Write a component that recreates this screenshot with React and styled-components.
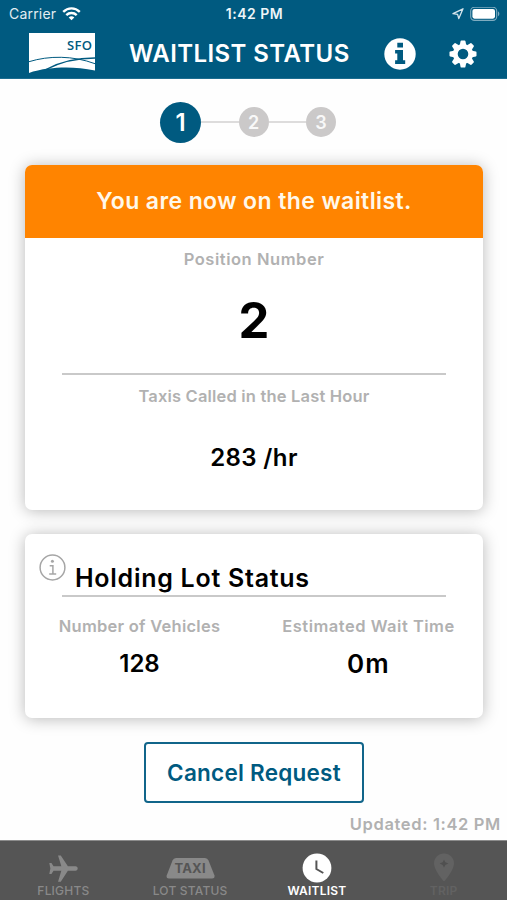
import React from "react";
import styled, { createGlobalStyle } from "styled-components";
import { IoMdAirplane } from "react-icons/io";

const blue = "#005a80";

const GlobalStyle = createGlobalStyle`
  * { box-sizing: border-box; }
  body { margin: 0; background: #fff; font-family: Inter, "Liberation Sans", sans-serif; }
  svg { display: block; flex: none; }
`;

const Screen = styled.div`
  width: 507px;
  height: 900px;
  overflow: hidden;
  display: flex;
  flex-direction: column;
  background: #fefefe;
`;

const Header = styled.header`
  height: 79px;
  flex: none;
  background: ${blue};
  border-bottom: 1px solid #1c6d90;
  color: #fff;
`;

const StatusBar = styled.div`
  height: 28px;
  padding: 0 7px 0 9px;
  display: grid;
  grid-template-columns: 1fr auto 1fr;
  align-items: center;
  font-size: 14px;
  line-height: 28px;
`;

const Carrier = styled.div`
  display: flex;
  align-items: center;
  gap: 6px;
  letter-spacing: 0.2px;
  color: #e3edf2;
`;

const Clock = styled.div`
  font-weight: 600;
  letter-spacing: 0.5px;
  color: #eef5f8;
`;

const Indicators = styled.div`
  display: flex;
  justify-content: flex-end;
  align-items: center;
  gap: 6px;
`;

const TitleBar = styled.div`
  height: 50px;
  padding: 0 30px 0 29px;
  display: flex;
  align-items: center;
`;

const Title = styled.h1`
  margin: 1px 0 0 34px;
  width: 255px;
  font-size: 24px;
  line-height: 30px;
  font-weight: 600;
  letter-spacing: 0.42px;
  white-space: nowrap;
`;

const HeaderActions = styled.div`
  flex: 1;
  display: flex;
  align-items: center;
  justify-content: space-between;
  padding-top: 2px;
`;

const Steps = styled.div`
  height: 86px;
  flex: none;
  display: flex;
  align-items: center;
  padding-left: 160px;
`;

const Step = styled.div`
  width: ${(p) => (p.$active ? 41 : 30)}px;
  height: ${(p) => (p.$active ? 41 : 30)}px;
  border-radius: 50%;
  background: ${(p) => (p.$active ? blue : "#cbc9c9")};
  color: ${(p) => (p.$active ? "#fff" : "#f8f8f8")};
  font-size: ${(p) => (p.$active ? 24 : 18)}px;
  font-weight: 600;
  display: flex;
  align-items: center;
  justify-content: center;
`;

const StepLine = styled.div`
  width: 37.5px;
  height: 2px;
  background: #dddcdc;
`;

const Card = styled.section`
  width: 458px;
  height: ${(p) => p.$height}px;
  margin: 0 0 24px 25px;
  flex: none;
  border-radius: 7px;
  overflow: hidden;
  background: #fff;
  box-shadow: 0 1px 16px rgba(0, 0, 0, 0.28);
  display: flex;
  flex-direction: column;
`;

const Banner = styled.div`
  height: 73px;
  flex: none;
  background: #ff8400;
  color: #fff8ea;
  font-size: 23px;
  font-weight: 600;
  line-height: 73px;
  text-align: center;
  letter-spacing: 0.4px;
`;

const Label = styled.div`
  font-size: 16.5px;
  font-weight: 600;
  line-height: 20px;
  color: #b1b1b1;
  text-align: center;
  white-space: nowrap;
  letter-spacing: ${(p) => p.$spacing}px;
`;

const Metric = styled.div`
  display: flex;
  flex-direction: column;
  gap: ${(p) => p.$gap}px;
  padding-top: 11px;
`;

const Value = styled.div`
  font-size: ${(p) => p.$size || 24}px;
  line-height: ${(p) => (p.$size > 40 ? 60 : 30)}px;
  font-weight: ${(p) => (p.$size > 40 ? 700 : 600)};
  letter-spacing: ${(p) => p.$spacing || 0}px;
  color: #000;
  text-align: center;
`;

const Divider = styled.div`
  width: 384px;
  height: 2px;
  flex: none;
  margin: ${(p) => p.$top || 0}px 0 0 37px;
  background: #c9c9c9;
`;

const CardHeading = styled.div`
  display: flex;
  padding: 20px 0 0 14px;
  gap: 9px;
`;

const Heading = styled.h2`
  margin: 9px 0 0;
  font-size: 25px;
  line-height: 31px;
  font-weight: 600;
  letter-spacing: 0.73px;
  color: #000;
`;

const LotGrid = styled.div`
  display: grid;
  grid-template-columns: 229px 229px;
  padding-top: 8px;
`;

const CancelButton = styled.button`
  width: 220px;
  height: 61px;
  flex: none;
  margin: 0 0 0 144px;
  padding: 0;
  border: 2px solid #11658a;
  border-radius: 4px;
  background: #fff;
  color: ${blue};
  font: 600 22.5px/30px Inter, sans-serif;
  letter-spacing: 0.25px;
`;

const Updated = styled(Label)`
  text-align: right;
  padding-right: 6px;
  margin-top: 11px;
`;

const TabBar = styled.nav`
  height: 60px;
  margin-top: auto;
  flex: none;
  display: grid;
  grid-template-columns: repeat(4, 1fr);
  background: #555;
  border-top: 1px solid #8c8c8c;
`;

const tones = { idle: "#898989", active: "#fff", disabled: "#626262" };

const Tab = styled.div`
  display: flex;
  flex-direction: column;
  align-items: center;
  padding-top: 12px;
  color: ${(p) => tones[p.$tone]};
  font-size: 12px;
  line-height: 16px;
  font-weight: ${(p) => (p.$tone === "idle" ? 500 : 600)};
  letter-spacing: 0.2px;
`;

const TabIcon = styled.div`
  height: 30px;
  display: flex;
  align-items: center;
`;

const Airplane = styled(IoMdAirplane)`
  transform: rotate(90deg);
`;

const TaxiSign = styled.div`
  display: grid;
  place-items: center;
  svg, span { grid-area: 1 / 1; }
  span { color: #555; font-size: 13px; font-weight: 700; line-height: 20px; }
`;

const Wifi = () => (
  <svg width="19" height="15" viewBox="0 0 19 15" fill="none" stroke="#fff" strokeWidth="2.4">
    <path d="M1.2 4.9C6 .2 13 .2 17.8 4.9" />
    <path d="M4.3 8.1C7.2 5.3 11.8 5.3 14.7 8.1" />
    <path d="M6.7 10.4C8.3 8.9 10.7 8.9 12.3 10.4L9.5 13.3Z" fill="#fff" stroke="none" />
  </svg>
);

const Location = () => (
  <svg width="12" height="12" viewBox="0 0 12 12" fill="none" stroke="#d6e5ec" strokeWidth="1.3" strokeLinejoin="round">
    <path d="M1 5.6L11 .8L6.8 10.6L5.6 6.4Z" />
  </svg>
);

const Battery = () => (
  <svg width="30" height="15" viewBox="0 0 30 15">
    <rect x=".7" y=".2" width="26" height="13.2" rx="3.8" fill="none" stroke="#7facc0" strokeWidth="1.1" />
    <rect x="2.4" y="1.9" width="22.6" height="9.8" rx="2.1" fill="#fff" />
    <path d="M28 4.5C29.8 5.2 29.8 8.5 28 9.2Z" fill="#7facc0" />
  </svg>
);

const Logo = () => (
  <svg width="66" height="40" viewBox="0 0 66 40">
    <path d="M0 0H66V37.5C49 33.5 31 34 19.5 35.5C12 36.5 5 38 0 40Z" fill="#fff" />
    <path d="M0 28.7C20 22.5 44 22.5 66 30.7" fill="none" stroke={blue} strokeWidth="1" />
    <path d="M17 36.5C33 28 49 25 66 25" fill="none" stroke={blue} strokeWidth="1.3" />
    <text x="38" y="16.5" fill={blue} fontFamily="Open Sans, sans-serif" fontSize="13" fontWeight="600" textLength="25">SFO</text>
  </svg>
);

const InfoSolid = () => (
  <svg width="32" height="32" viewBox="0 0 32 32">
    <circle cx="16" cy="16" r="15.7" fill="#fff" />
    <path d="M13.3 4.8H19V9.5H13.3ZM11.1 12H19V22.3H21.2V26H11.1V22.3H13.3V15.6H11.1Z" fill={blue} />
  </svg>
);

const InfoOutline = () => (
  <svg width="27" height="27" viewBox="0 0 27 27" fill="none" stroke="#a6a6a6" strokeWidth="1.5">
    <circle cx="13.5" cy="13.5" r="12.4" />
    <circle cx="13.4" cy="7.3" r="1.5" fill="#a6a6a6" stroke="none" />
    <path d="M10.7 11.7H13.9V19.6M10.2 20.1H17.2" />
  </svg>
);

const Gear = () => (
  <svg width="28" height="28" viewBox="-14 -14 28 28" fill="#fff">
    <circle r="7.7" fill="none" stroke="#fff" strokeWidth="4.8" />
    {[0, 45, 90, 135, 180, 225, 270, 315].map((a) => (
      <path key={a} transform={`rotate(${a})`} d="M-3.2 -9L-2.4 -12.9Q-2.2 -13.5 -1.6 -13.5H1.6Q2.2 -13.5 2.4 -12.9L3.2 -9Z" />
    ))}
  </svg>
);

const ClockIcon = () => (
  <svg width="30" height="30" viewBox="0 0 30 30">
    <circle cx="15" cy="15" r="14.4" fill="#fff" />
    <path d="M14.4 7.5V16L21.3 20" fill="none" stroke="#555" strokeWidth="2" />
  </svg>
);

const Pin = () => (
  <svg width="22" height="30" viewBox="0 0 22 30">
    <path d="M11 .5C5 .5 1 5 1 10.5C1 17.5 11 28.5 11 28.5S21 17.5 21 10.5C21 5 17 .5 11 .5Z" fill="#626262" />
    <path d="M11 6.5L12.3 9.3L15.4 10.5L12.3 11.9L11 14.7L9.7 11.9L6.6 10.5L9.7 9.3Z" fill="#505050" />
  </svg>
);

export default function App() {
  return (
    <Screen>
      <GlobalStyle />
      <Header>
        <StatusBar>
          <Carrier>Carrier <Wifi /></Carrier>
          <Clock>1:42 PM</Clock>
          <Indicators><Location /><Battery /></Indicators>
        </StatusBar>
        <TitleBar>
          <Logo />
          <Title>WAITLIST STATUS</Title>
          <HeaderActions>
            <InfoSolid />
            <Gear />
          </HeaderActions>
        </TitleBar>
      </Header>
      <Steps>
        <Step $active>1</Step>
        <StepLine />
        <Step>2</Step>
        <StepLine />
        <Step>3</Step>
      </Steps>
      <Card $height={345}>
        <Banner>You are now on the waitlist.</Banner>
        <Metric $gap={22}>
          <Label $spacing={0.55}>Position Number</Label>
          <Value $size={49}>2</Value>
        </Metric>
        <Divider $top={22} />
        <Metric $gap={37}>
          <Label $spacing={0.18}>Taxis Called in the Last Hour</Label>
          <Value $spacing={0.4}>283 /hr</Value>
        </Metric>
      </Card>
      <Card $height={184}>
        <CardHeading>
          <InfoOutline />
          <Heading>Holding Lot Status</Heading>
        </CardHeading>
        <Divider $top={1} />
        <LotGrid>
          <Metric $gap={13}>
            <Label $spacing={0.26}>Number of Vehicles</Label>
            <Value>128</Value>
          </Metric>
          <Metric $gap={13}>
            <Label $spacing={0.5}>Estimated Wait Time</Label>
            <Value $size={26} $spacing={1.2}>0m</Value>
          </Metric>
        </LotGrid>
      </Card>
      <CancelButton>Cancel Request</CancelButton>
      <Updated $spacing={0.65}>Updated: 1:42 PM</Updated>
      <TabBar>
        <Tab $tone="idle"><TabIcon><Airplane size={35} /></TabIcon>FLIGHTS</Tab>
        <Tab $tone="idle">
          <TabIcon>
            <TaxiSign>
              <svg width="49" height="21" viewBox="0 0 49 21">
                <path d="M10 0H39Q41.5 0 42.5 2.5L48.5 17.5Q49 20.5 46 20.5H3Q0 20.5 .7 17.5L6.5 2.5Q7.5 0 10 0Z" fill="#898989" />
              </svg>
              <span>TAXI</span>
            </TaxiSign>
          </TabIcon>
          LOT STATUS
        </Tab>
        <Tab $tone="active"><TabIcon><ClockIcon /></TabIcon>WAITLIST</Tab>
        <Tab $tone="disabled"><TabIcon><Pin /></TabIcon>TRIP</Tab>
      </TabBar>
    </Screen>
  );
}
